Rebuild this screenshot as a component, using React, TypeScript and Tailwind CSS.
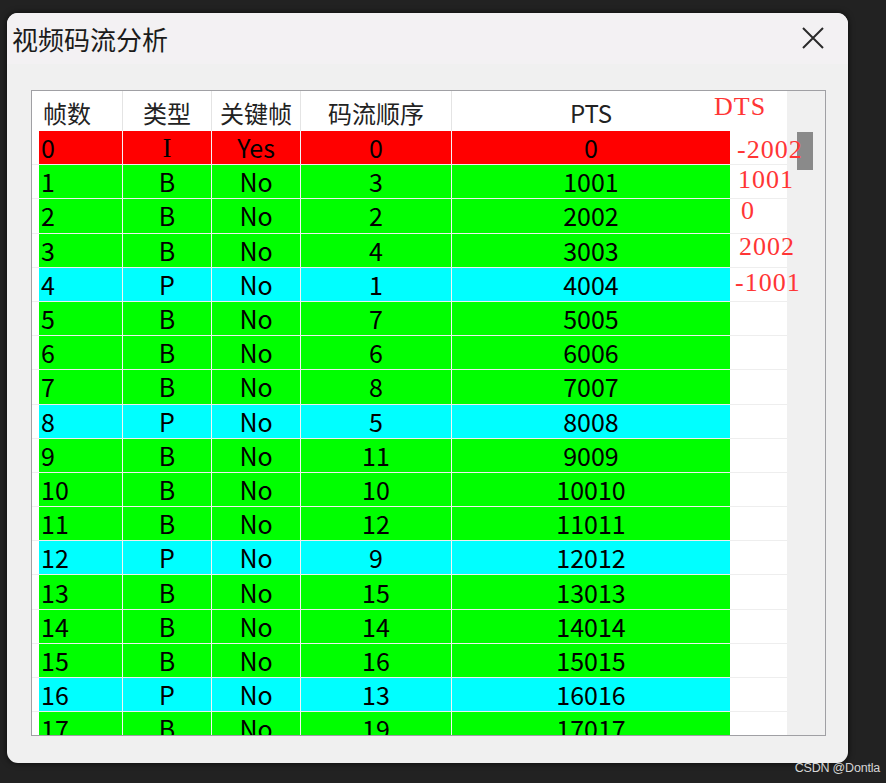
import React from 'react';

type Frame = { n: number; type: string; key: string; order: number; pts: number };

const frames: Frame[] = [
  { n: 0, type: 'I', key: 'Yes', order: 0, pts: 0 },
  { n: 1, type: 'B', key: 'No', order: 3, pts: 1001 },
  { n: 2, type: 'B', key: 'No', order: 2, pts: 2002 },
  { n: 3, type: 'B', key: 'No', order: 4, pts: 3003 },
  { n: 4, type: 'P', key: 'No', order: 1, pts: 4004 },
  { n: 5, type: 'B', key: 'No', order: 7, pts: 5005 },
  { n: 6, type: 'B', key: 'No', order: 6, pts: 6006 },
  { n: 7, type: 'B', key: 'No', order: 8, pts: 7007 },
  { n: 8, type: 'P', key: 'No', order: 5, pts: 8008 },
  { n: 9, type: 'B', key: 'No', order: 11, pts: 9009 },
  { n: 10, type: 'B', key: 'No', order: 10, pts: 10010 },
  { n: 11, type: 'B', key: 'No', order: 12, pts: 11011 },
  { n: 12, type: 'P', key: 'No', order: 9, pts: 12012 },
  { n: 13, type: 'B', key: 'No', order: 15, pts: 13013 },
  { n: 14, type: 'B', key: 'No', order: 14, pts: 14014 },
  { n: 15, type: 'B', key: 'No', order: 16, pts: 15015 },
  { n: 16, type: 'P', key: 'No', order: 13, pts: 16016 },
  { n: 17, type: 'B', key: 'No', order: 19, pts: 17017 },
];

// DTS labels sit on top of the table, not in it
const dtsLabels = [
  { text: 'DTS', left: 714, top: 96 },
  { text: '-2002', left: 737, top: 139 },
  { text: '1001', left: 738, top: 169 },
  { text: '0', left: 741, top: 200 },
  { text: '2002', left: 739, top: 236 },
  { text: '-1001', left: 735, top: 272 },
];

const rowBg = (type: string) => {
  if (type === 'I') return 'bg-[#ff0000]';
  if (type === 'P') return 'bg-[#00ffff]';
  return 'bg-[#00ff00]';
};

function Row({ f }: { f: Frame }) {
  const bg = rowBg(f.type);
  const cell = `${bg} h-full flex items-center justify-center border-r border-[#f4f4f4]`;
  return (
    <div className="flex h-[34.2px] border-b border-[#eeeeee]">
      <div className="w-[7px] bg-white" />
      <div className={`${bg} w-[84px] h-full flex items-center pl-[2px] border-r border-[#f4f4f4]`}>{f.n}</div>
      <div className={`${cell} w-[89px]`}>
        {f.type === 'I' ? <span className="font-['Liberation_Serif',serif] text-[27px] pt-[1px]">I</span> : f.type}
      </div>
      <div className={`${cell} w-[89px]`}>{f.key}</div>
      <div className={`${cell} w-[151px]`}>{f.order}</div>
      <div className={`${bg} w-[278px] h-full flex items-center justify-center`}>{f.pts}</div>
      <div className="w-[57px] bg-white" />
    </div>
  );
}

export default function App() {
  return (
    <div className="relative w-[886px] h-[783px] overflow-hidden bg-[#222222] pt-[13px] pl-[7px]">
      <div className="w-[841px] h-[750px] rounded-[11px] bg-[#f0f0f0] flex flex-col shadow-[0_0_6px_rgba(0,0,0,0.7)]">
        {/* title bar */}
        <div className="h-[51px] rounded-t-[11px] bg-[#f3f1f3] flex items-center justify-between pl-[5px] pr-[24px]">
          <span className="text-[26px] leading-none text-[#1b1b1b] font-['Noto_Sans_CJK_SC',sans-serif]">视频码流分析</span>
          <svg width="22" height="22" viewBox="0 0 22 22" className="mt-[-1px]">
            <path d="M1 1 L21 21 M21 1 L1 21" stroke="#2a2a2a" strokeWidth="2" />
          </svg>
        </div>

        {/* table */}
        <div className="pl-[24px] pt-[26px]">
          <div className="w-[795px] h-[646px] border border-[#a0a0a4] bg-white flex overflow-hidden font-['Noto_Sans_CJK_SC',sans-serif] text-black leading-none">
            <div className="w-[755px] flex flex-col">
              <div className="flex h-[40px] shrink-0 bg-white text-[24px] text-[#222]">
                <div className="w-[91px] flex items-center pl-[11px] pt-[4px] border-r border-[#e4e4e4]">帧数</div>
                <div className="w-[89px] flex items-center justify-center pt-[4px] border-r border-[#e4e4e4]">类型</div>
                <div className="w-[89px] flex items-center justify-center pt-[4px] border-r border-[#e4e4e4]">关键帧</div>
                <div className="w-[151px] flex items-center justify-center pt-[4px] border-r border-[#e4e4e4]">码流顺序</div>
                <div className="w-[278px] flex items-center justify-center pt-[4px]">PTS</div>
                <div className="w-[57px]" />
              </div>
              <div className="flex flex-col text-[25px]">
                {frames.map((f) => (
                  <Row key={f.n} f={f} />
                ))}
              </div>
            </div>
            {/* vertical scrollbar */}
            <div className="w-[38px] bg-[#f0f0f0] pt-[41px] pl-[10px]">
              <div className="w-[16px] h-[38px] bg-[#8a8a8a]" />
            </div>
          </div>
        </div>
      </div>

      {dtsLabels.map((l) => (
        <span
          key={l.text + l.top}
          className="absolute text-[26px] leading-[22px] tracking-[1px] text-[#ff3535] font-['Liberation_Serif',serif]"
          style={{ left: l.left, top: l.top }}
        >
          {l.text}
        </span>
      ))}

      <span className="absolute right-[6px] bottom-[9px] text-[12.5px] leading-none text-[#d6d6d6] font-['Liberation_Sans',sans-serif] tracking-[-0.2px]">
        CSDN @Dontla
      </span>
    </div>
  );
}
